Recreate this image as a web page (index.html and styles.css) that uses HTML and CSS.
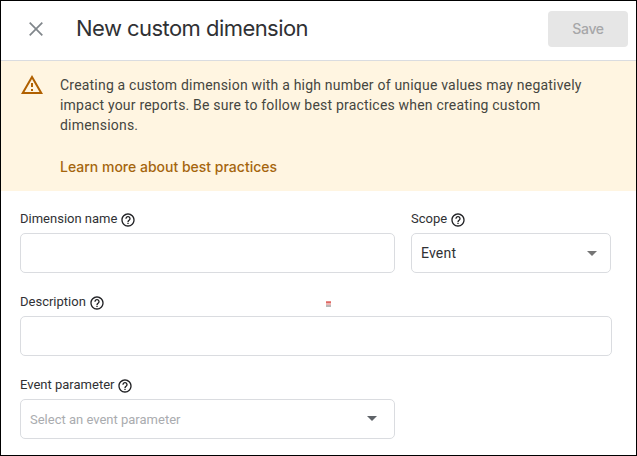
FILE: index.html
```html
<!DOCTYPE html>
<html lang="en">
<head>
<meta charset="utf-8">
<title>New custom dimension</title>
<link rel="stylesheet" href="styles.css">
</head>
<body>
<svg width="0" height="0" class="defs" aria-hidden="true">
  <symbol id="help" viewBox="0 0 24 24"><path d="M11 18h2v-2h-2v2zm1-16C6.480 2 2 6.480 2 12s4.480 10 10 10 10-4.480 10-10S17.520 2 12 2zm0 18c-4.410 0-8-3.590-8-8s3.590-8 8-8 8 3.590 8 8-3.590 8-8 8zm0-14c-2.210 0-4 1.790-4 4h2c0-1.100.9-2 2-2s2 .9 2 2c0 2-3 1.750-3 5h2c0-2.250 3-2.500 3-5 0-2.210-1.790-4-4-4z"/></symbol>
</svg>
<main class="panel">
  <header class="header">
    <svg class="close" viewBox="0 0 14 14"><path d="M.7.7l12.600 12.600M13.300.7L.7 13.300"/></svg>
    <h1 class="title">New custom dimension</h1>
    <button class="save" disabled>Save</button>
  </header>
  <section class="notice">
    <svg class="warning" viewBox="1 2 22 19"><path d="M12 5.990L19.530 19H4.470L12 5.990M12 2L1 21h22L12 2zm1 14h-2v2h2v-2zm0-6h-2v4h2v-4z"/></svg>
    <div class="message">
      <p class="text">Creating a custom dimension with a high number of unique values may negatively<br>impact your reports. Be sure to follow best practices when creating custom<br>dimensions.</p>
      <a class="link">Learn more about best practices</a>
    </div>
  </section>
  <form class="form">
    <div class="row">
      <div class="field name">
        <div class="label"><span>Dimension name</span><svg class="help"><use href="#help"/></svg></div>
        <div class="box"></div>
      </div>
      <div class="field scope">
        <div class="label"><span>Scope</span><svg class="help"><use href="#help"/></svg></div>
        <div class="box"><span class="value">Event</span><i class="arrow"></i></div>
      </div>
    </div>
    <div class="field">
      <div class="label"><span>Description</span><svg class="help"><use href="#help"/></svg></div>
      <div class="box"></div>
      <i class="mark"></i>
    </div>
    <div class="field parameter">
      <div class="label"><span>Event parameter</span><svg class="help"><use href="#help"/></svg></div>
      <div class="box"><span class="placeholder">Select an event parameter</span><i class="arrow small"></i></div>
    </div>
  </form>
</main>
</body>
</html>
```
FILE: styles.css
```css
* { box-sizing: border-box; }
body { margin: 0; font-family: Roboto, sans-serif; color: #303134; background: #fff; }
.defs { position: absolute; }
.panel { width: 637px; height: 456px; border: 1px solid #000; overflow: hidden; }
.header { display: flex; align-items: center; height: 60px; padding: 0 8px 3px 28px; border-bottom: 1px solid #dadce0; }
.close { width: 14px; height: 14px; fill: none; stroke: #80868b; stroke-width: 1.7; }
.title { margin: 0 0 2px 33px; font: 400 22px/28px Inter, sans-serif; letter-spacing: -.55px; white-space: nowrap; }
.save { width: 80px; height: 36px; margin-left: auto; padding: 0 0 1px; border: 0; border-radius: 4px; background: #e6e6e6; color: #a6a7a9; font: 500 14px/20px Inter, sans-serif; letter-spacing: -.3px; }
.notice { display: flex; height: 130px; padding: 14px 20px 0; background: #fff5e1; }
.warning { width: 22px; height: 19px; margin-right: 17px; fill: #b06000; }
.text { margin: 0; font-size: 14px; line-height: 20px; letter-spacing: .2px; color: #45463f; white-space: nowrap; }
.link { display: block; margin-top: 22px; font: 500 14px/20px Inter, sans-serif; letter-spacing: 0; color: #a5650e; white-space: nowrap; }
.form { display: flex; flex-direction: column; gap: 18px; padding: 17px 24px 0 19px; }
.row { display: flex; gap: 16px; }
.field { position: relative; }
.name, .parameter { width: 375px; }
.scope { width: 200px; }
.label { display: flex; align-items: center; gap: 3px; height: 25px; padding-bottom: 4px; font-size: 13px; white-space: nowrap; }
.help { width: 16px; height: 16px; margin-top: 2px; fill: #202124; }
.box { display: flex; align-items: center; justify-content: space-between; height: 40px; padding: 0 13px 0 9px; border: 1px solid #dadce0; border-radius: 5px; }
.value { font-size: 14px; letter-spacing: .2px; }
.placeholder { font-size: 13px; color: #aaacaf; }
.arrow { border: 5px solid transparent; border-top-color: #757575; border-bottom: 0; }
.small { margin-right: 4px; margin-bottom: 2px; border-width: 5px 5px 0; border-top-color: #5f6368; }
.mark { position: absolute; left: 306px; top: 10px; width: 5px; height: 6px; background: linear-gradient(#e98c88 0 20%, #dc6964 20% 40%, #efb5b2 40% 60%, #b8b8b8 60%); }
```
